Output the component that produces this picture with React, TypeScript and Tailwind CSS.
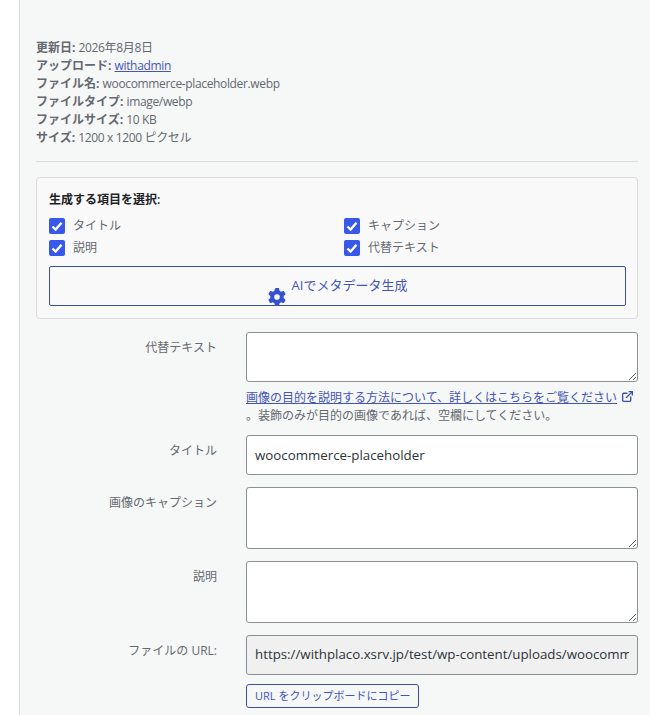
import type { ReactNode } from "react"
import { ExternalLink } from "lucide-react"

const font = { fontFamily: '"Open Sans", "Noto Sans CJK JP", sans-serif' }

const metaRows = [
  { label: "更新日:", value: "2026年8月8日" },
  { label: "アップロード:", link: "withadmin" },
  { label: "ファイル名:", value: "woocommerce-placeholder.webp" },
  { label: "ファイルタイプ:", value: "image/webp" },
  { label: "ファイルサイズ:", value: "10 KB" },
  { label: "サイズ:", value: "1200 x 1200 ピクセル" },
]

const Check = ({ label }: { label: string }) => (
  <label className="flex items-center h-[22px] gap-2">
    <span className="flex items-center justify-center size-4 rounded-[2px] bg-[#3858e9]">
      <svg viewBox="0 0 16 16" className="size-4">
        <path d="M3.5 8.5 6.6 11.5 12.5 4.8" fill="none" stroke="#fff" strokeWidth="2.4" />
      </svg>
    </span>
    <span className="text-[12px] text-[#646970]">{label}</span>
  </label>
)

const Gear = () => (
  <svg viewBox="0 0 512 512" className="size-[18px] absolute left-[218px] top-[21px]" fill="#3550d0">
    <path d="M495.9 166.6c3.2 8.7.5 18.4-6.4 24.6l-43.3 39.4c1.1 8.3 1.7 16.8 1.7 25.4s-.6 17.1-1.7 25.4l43.3 39.4c6.9 6.2 9.6 15.9 6.4 24.6-4.4 11.9-9.7 23.3-15.8 34.3l-4.7 8.1c-6.6 11-14 21.4-22.1 31.2-5.9 7.2-15.7 9.6-24.5 6.8l-55.7-17.7c-13.4 10.3-28.2 18.9-44 25.4l-12.5 57.1c-2 9.1-9 16.3-18.2 17.8-13.8 2.3-28 3.5-42.5 3.5s-28.7-1.2-42.5-3.5c-9.2-1.5-16.2-8.7-18.2-17.8l-12.5-57.1c-15.8-6.5-30.6-15.1-44-25.4l-55.6 17.8c-8.8 2.8-18.6.3-24.5-6.8-8.1-9.8-15.5-20.2-22.1-31.2l-4.7-8.1c-6.1-11-11.4-22.4-15.8-34.3-3.2-8.7-.5-18.4 6.4-24.6l43.3-39.4c-1.1-8.4-1.7-16.9-1.7-25.5s.6-17.1 1.7-25.4l-43.3-39.4c-6.9-6.2-9.6-15.9-6.4-24.6 4.4-11.9 9.7-23.3 15.8-34.3l4.7-8.1c6.6-11 14-21.4 22.1-31.2 5.9-7.2 15.7-9.6 24.5-6.8l55.7 17.7c13.4-10.3 28.2-18.9 44-25.4l12.5-57.1c2-9.1 9-16.3 18.2-17.8C227.3 1.2 241.5 0 256 0s28.7 1.2 42.5 3.5c9.2 1.5 16.2 8.7 18.2 17.8l12.5 57.1c15.8 6.5 30.6 15.1 44 25.4l55.7-17.7c8.8-2.8 18.6-.3 24.5 6.8 8.1 9.8 15.5 20.2 22.1 31.2l4.7 8.1c6.1 11 11.4 22.4 15.8 34.3zM256 336a80 80 0 1 0 0-160 80 80 0 1 0 0 160z" />
  </svg>
)

const Field = ({ label, children }: { label: string; children?: ReactNode }) => (
  <div className="flex">
    <div className="w-[181px] shrink-0 text-right text-[12px] text-[#646970] pt-[7px]">{label}</div>
    <div className="ml-[29px] min-w-0 flex-1">{children}</div>
  </div>
)

export default function App() {
  return (
    <div className="flex h-[715px] w-[650px] overflow-hidden bg-white" style={font}>
      <div className="w-[19px] shrink-0" />
      <div className="min-w-0 flex-1 border-l border-[#dcdcde] bg-[#f6f7f7] pl-4 pr-3 pt-[39px]">
        <div className="text-[12px] leading-[18px] text-[#646970]">
          {metaRows.map((row) => (
            <div key={row.label}>
              <strong className="font-bold">{row.label}</strong>{" "}
              {row.link ? (
                <a className="text-[#4355b9] underline tracking-[-0.35px]">{row.link}</a>
              ) : (
                <span className="tracking-[-0.35px]">{row.value}</span>
              )}
            </div>
          ))}
        </div>
        <hr className="mt-[14px] border-[#dcdcde]" />

        <div className="mt-[15px] h-[142px] rounded-[4px] border border-[#dcdcde] bg-[#f9f9f9] pl-3 pr-[11px] pt-[13px]">
          <div className="text-[12px] leading-[18px] font-semibold text-[#1d2327]">生成する項目を選択:</div>
          <div className="mt-[6px] grid grid-cols-[295px_1fr]">
            <Check label="タイトル" />
            <Check label="キャプション" />
            <Check label="説明" />
            <Check label="代替テキスト" />
          </div>
          <button className="relative mt-[7px] block h-10 w-full rounded-[2px] border border-[#3a4fa8] text-[13px] text-[#4355b9] pb-[1px]">
            <Gear />
            <span className="pl-[24px]">AIでメタデータ生成</span>
          </button>
        </div>

        <div className="mt-[13px] flex flex-col">
          <Field label="代替テキスト">
            <textarea className="block w-full h-[50px] bg-white border border-[#8c8f94] rounded-[3px]" />
            <p className="mt-[7px] text-[12px] leading-[18px] text-[#646970]">
              <a className="text-[#4355b9] underline">画像の目的を説明する方法について、詳しくはこちらをご覧ください</a>
              <ExternalLink className="ml-[4px] inline size-[13px] align-[-1px] text-[#3a4fa8]" strokeWidth={2.5} />
              <br />。装飾のみが目的の画像であれば、空欄にしてください。
            </p>
          </Field>
          <div className="mt-[10px]">
            <Field label="タイトル">
              <div className="h-10 flex items-center rounded-[3px] border border-[#8c8f94] bg-white px-2 pt-[1px] text-[13.3px] text-[#2c3338]">
                woocommerce-placeholder
              </div>
            </Field>
          </div>
          <div className="mt-[12px]">
            <Field label="画像のキャプション">
              <textarea className="block w-full h-[62px] bg-white border border-[#8c8f94] rounded-[3px]" />
            </Field>
          </div>
          <div className="mt-[12px]">
            <Field label="説明">
              <textarea className="block w-full h-[62px] bg-white border border-[#8c8f94] rounded-[3px]" />
            </Field>
          </div>
          <div className="mt-[12px]">
            <Field label="ファイルの URL:">
              <div className="h-10 flex items-center overflow-hidden whitespace-nowrap rounded-[3px] border border-[#8c8f94] bg-[#f0f0f1] px-2 text-[13.3px] text-[#2c3338]">
                <span className="overflow-hidden">https://withplaco.xsrv.jp/test/wp-content/uploads/woocommerce-placeholder.webp</span>
              </div>
              <button className="mt-[9px] block h-6 rounded-[3px] border border-[#3a4fa8] bg-[#f6f7f7] px-2 text-[11px] text-[#4355b9]">
                URL をクリップボードにコピー
              </button>
            </Field>
          </div>
        </div>
      </div>
    </div>
  )
}
